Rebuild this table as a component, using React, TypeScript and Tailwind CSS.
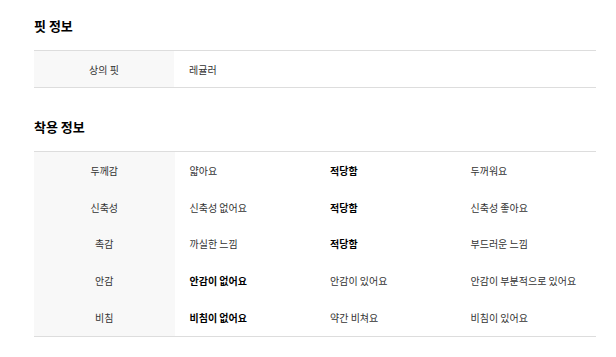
export default function App() {
  const rows: { label: string; opts: { t: string; b?: boolean }[] }[] = [
    { label: "두께감", opts: [{ t: "얇아요" }, { t: "적당함", b: true }, { t: "두꺼워요" }] },
    { label: "신축성", opts: [{ t: "신축성 없어요" }, { t: "적당함", b: true }, { t: "신축성 좋아요" }] },
    { label: "촉감", opts: [{ t: "까실한 느낌" }, { t: "적당함", b: true }, { t: "부드러운 느낌" }] },
    { label: "안감", opts: [{ t: "안감이 없어요", b: true }, { t: "안감이 있어요" }, { t: "안감이 부분적으로 있어요" }] },
    { label: "비침", opts: [{ t: "비침이 없어요", b: true }, { t: "약간 비쳐요" }, { t: "비침이 있어요" }] },
  ];
  return (
    <div
      className="w-[616px] h-[357px] bg-white pt-[17px] pl-[34px] text-[#333]"
      style={{ fontFamily: '"Noto Sans CJK KR", "Noto Sans", sans-serif' }}
    >
      <div className="w-[562px]">
        <h2 className="text-[13px] font-bold leading-[18px] h-[18px] text-black">핏 정보</h2>
        <div className="mt-[15px] border-y border-[#dddddd] flex text-[10px]">
          <div className="w-[140px] h-[36px] bg-[#f8f8f8] flex items-center justify-center">상의 핏</div>
          <div className="flex-1 h-[36px] flex items-center pl-[15px]">레귤러</div>
        </div>
        <h2 className="mt-[30px] text-[13px] font-bold leading-[18px] h-[18px] text-black">착용 정보</h2>
        <div className="mt-[15px] border-y border-[#dddddd] text-[10px]">
          {rows.map((r) => (
            <div key={r.label} className="grid grid-cols-4 h-[36.8px]">
              <div className="bg-[#f8f8f8] flex items-center justify-center">{r.label}</div>
              {r.opts.map((o, i) => (
                <div
                  key={i}
                  className={`flex items-center pl-[15px] ${o.b ? "font-bold text-black" : ""}`}
                >
                  {o.t}
                </div>
              ))}
            </div>
          ))}
        </div>
      </div>
    </div>
  );
}
